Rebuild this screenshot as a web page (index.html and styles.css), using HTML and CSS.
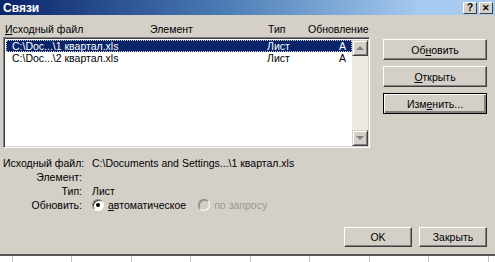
FILE: index.html
```html
<!DOCTYPE html>
<html lang="ru">
<head>
    <meta charset="UTF-8">
    <title>Связи</title>
    <link rel="stylesheet" href="styles.css">
</head>
<body>
    <div class="titlebar">
        <span class="title">Связи</span>
        <div class="caption-buttons">
            <span class="cap-btn">?</span>
            <span class="cap-btn cap-close">&#x2715;</span>
        </div>
    </div>

    <div class="top">
        <div class="links">
            <div class="list-head">
                <span class="col-name"><u>И</u>сходный файл</span>
                <span class="col-item">Элемент</span>
                <span class="col-type">Тип</span>
                <span class="col-upd">Обновление</span>
            </div>
            <div class="listbox">
                <div class="rows">
                    <div class="row selected">
                        <span class="col-name">C:\Doc...\1 квартал.xls</span>
                        <span class="col-item"></span>
                        <span class="col-type">Лист</span>
                        <span class="col-upd">A</span>
                    </div>
                    <div class="row">
                        <span class="col-name">C:\Doc...\2 квартал.xls</span>
                        <span class="col-item"></span>
                        <span class="col-type">Лист</span>
                        <span class="col-upd">A</span>
                    </div>
                </div>
                <div class="scrollbar">
                    <span class="arrow"><span class="tri-up"></span></span>
                    <span class="track"></span>
                    <span class="arrow"><span class="tri-down"></span></span>
                </div>
            </div>
        </div>
        <div class="side-buttons">
            <button class="btn">Об<u>н</u>овить</button>
            <button class="btn"><u>О</u>ткрыть</button>
            <button class="btn btn-default">Изм<u>е</u>нить...</button>
        </div>
    </div>

    <div class="details">
        <span class="label">Исходный файл:</span>
        <span>C:\Documents and Settings...\1 квартал.xls</span>
        <span class="label">Элемент:</span>
        <span></span>
        <span class="label">Тип:</span>
        <span>Лист</span>
        <span class="label">Обновить:</span>
        <span class="radios">
            <span class="radio"><span class="dot"></span></span>
            <span class="radio-text"><u>а</u>втоматическое</span>
            <span class="radio disabled"></span>
            <span class="radio-text disabled-text">по запросу</span>
        </span>
    </div>

    <div class="footer">
        <button class="btn btn-small">OK</button>
        <button class="btn btn-small">Закрыть</button>
    </div>

    <div class="sheet"></div>
</body>
</html>
```

FILE: styles.css
```css
body {
    margin: 0;
    width: 495px;
    height: 262px;
    overflow: hidden;
    background-color: #d4d0c8;
    font-family: 'Liberation Sans', Arial, sans-serif;
    font-size: 10.5px;
    color: #000;
}
u {
    text-decoration: underline;
}
.titlebar {
    height: 15px;
    display: flex;
    align-items: center;
    justify-content: space-between;
    background: linear-gradient(to right, #0a246a, #4a7cb5 45%, #a6caf0 85%);
    padding: 0 2px 0 3px;
}
.title {
    color: white;
    font-weight: bold;
    font-size: 12px;
}
.caption-buttons {
    display: flex;
    gap: 2px;
}
.cap-btn {
    width: 14px;
    height: 12px;
    box-sizing: border-box;
    background: #d4d0c8;
    border-top: 1px solid #fff;
    border-left: 1px solid #fff;
    border-right: 1px solid #404040;
    border-bottom: 1px solid #404040;
    font-size: 10px;
    font-weight: bold;
    line-height: 10px;
    text-align: center;
}
.cap-close {
    font-size: 9px;
}
.top {
    display: flex;
    margin-top: 8px;
    padding-left: 3px;
}
.links {
    width: 367px;
}
.list-head {
    display: flex;
    height: 14px;
    line-height: 13px;
    white-space: nowrap;
}
.col-name {
    width: 145px;
    padding-left: 2px;
}
.col-item {
    width: 118px;
}
.col-type {
    width: 40px;
}
.col-upd {
    width: 62px;
}
.listbox {
    height: 111px;
    box-sizing: border-box;
    display: flex;
    background: white;
    border-top: 1px solid #808080;
    border-left: 1px solid #808080;
    border-right: 1px solid #fff;
    border-bottom: 1px solid #fff;
    box-shadow: inset 1px 1px 0 #404040, inset -1px -1px 0 #d4d0c8;
    padding: 2px 1px 1px 2px;
}
.rows {
    flex: 1;
}
.row {
    display: flex;
    height: 12px;
    line-height: 12px;
    white-space: nowrap;
}
.row .col-name {
    width: 255px;
    padding-left: 6px;
}
.row .col-item {
    width: 0;
}
.row .col-type {
    width: 72px;
}
.row .col-upd {
    width: auto;
}
.selected {
    background: #0a246a;
    color: white;
    outline: 1px dotted #d4d0c8;
    outline-offset: -1px;
}
.scrollbar {
    width: 16px;
    display: flex;
    flex-direction: column;
    background: #ece9e3;
}
.track {
    flex: 1;
}
.arrow {
    height: 16px;
    box-sizing: border-box;
    display: flex;
    align-items: center;
    justify-content: center;
    background: #d4d0c8;
    border-top: 1px solid #d4d0c8;
    border-left: 1px solid #d4d0c8;
    border-right: 1px solid #404040;
    border-bottom: 1px solid #404040;
    box-shadow: inset 1px 1px 0 #fff, inset -1px -1px 0 #808080;
}
.tri-up {
    border-left: 4px solid transparent;
    border-right: 4px solid transparent;
    border-bottom: 4px solid #808080;
}
.tri-down {
    border-left: 4px solid transparent;
    border-right: 4px solid transparent;
    border-top: 4px solid #808080;
}
.side-buttons {
    display: flex;
    flex-direction: column;
    gap: 6px;
    margin-left: 13px;
    padding-top: 16px;
}
.btn {
    width: 104px;
    height: 21px;
    background: #d4d0c8;
    font-family: inherit;
    font-size: 10.5px;
    color: #000;
    padding: 0;
    border-top: 1px solid #fff;
    border-left: 1px solid #fff;
    border-right: 1px solid #404040;
    border-bottom: 1px solid #404040;
    box-shadow: inset -1px -1px 0 #808080;
}
.btn-default {
    border: 1px solid #000;
    box-shadow: inset 1px 1px 0 #fff, inset -2px -2px 0 #808080;
}
.details {
    display: grid;
    grid-template-columns: 79px 1fr;
    column-gap: 10px;
    grid-auto-rows: 14px;
    line-height: 14px;
    margin-top: 8px;
    padding-left: 3px;
    white-space: nowrap;
}
.label {
    text-align: right;
}
.radios {
    display: flex;
    align-items: center;
}
.radio {
    width: 12px;
    height: 12px;
    box-sizing: border-box;
    border-radius: 50%;
    background: white;
    border: 1px solid;
    border-color: #808080 #fff #fff #808080;
    box-shadow: inset 1px 1px 0 #404040;
    display: flex;
    align-items: center;
    justify-content: center;
}
.dot {
    width: 4px;
    height: 4px;
    border-radius: 50%;
    background: #000;
}
.radio.disabled {
    background: #d4d0c8;
    box-shadow: inset 1px 1px 0 #a0a0a0;
    margin-left: 12px;
}
.radio-text {
    margin-left: 4px;
}
.disabled-text {
    color: #9a9890;
}
.footer {
    display: flex;
    justify-content: flex-end;
    gap: 7px;
    margin-top: 15px;
    padding-right: 8px;
}
.btn-small {
    width: 68px;
    height: 20px;
}
.sheet {
    margin-top: 7px;
    height: 8px;
    border-top: 2px solid #5a5a5a;
    background-color: white;
    background-image: repeating-linear-gradient(to right, transparent 0, transparent 12px, #c0c0c0 12px, #c0c0c0 13px, transparent 13px, transparent 59.5px);
}
```
